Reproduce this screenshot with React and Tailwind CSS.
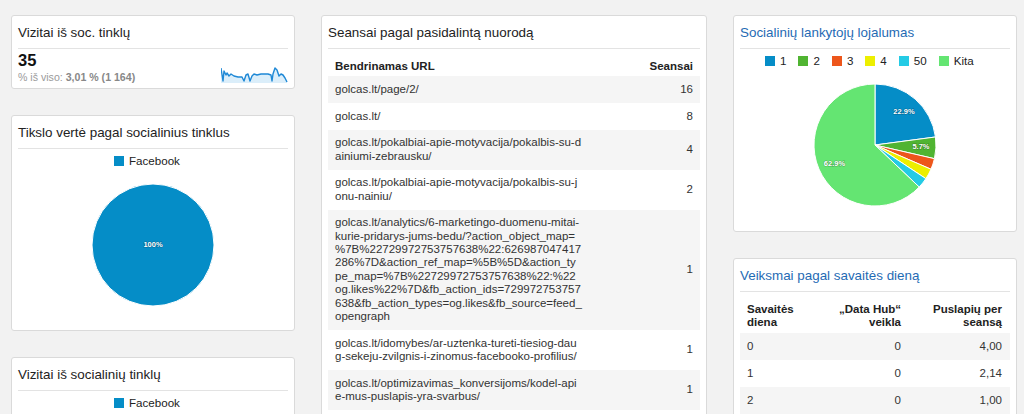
const FONT = "font-['Liberation_Sans',Arial,Helvetica,sans-serif]"

const SHARED = [
  { url: ['golcas.lt/page/2/'], n: 16 },
  { url: ['golcas.lt/'], n: 8 },
  { url: ['golcas.lt/pokalbiai-apie-motyvacija/pokalbis-su-d', 'ainiumi-zebrausku/'], n: 4 },
  { url: ['golcas.lt/pokalbiai-apie-motyvacija/pokalbis-su-j', 'onu-nainiu/'], n: 2 },
  {
    url: [
      'golcas.lt/analytics/6-marketingo-duomenu-mitai-',
      'kurie-pridarys-jums-bedu/?action_object_map=',
      '%7B%22729972753757638%22:626987047417',
      '286%7D&action_ref_map=%5B%5D&action_ty',
      'pe_map=%7B%22729972753757638%22:%22',
      'og.likes%22%7D&fb_action_ids=729972753757',
      '638&fb_action_types=og.likes&fb_source=feed_',
      'opengraph',
    ],
    n: 1,
  },
  { url: ['golcas.lt/idomybes/ar-uztenka-tureti-tiesiog-dau', 'g-sekeju-zvilgnis-i-zinomus-facebooko-profilius/'], n: 1 },
  { url: ['golcas.lt/optimizavimas_konversijoms/kodel-api', 'e-mus-puslapis-yra-svarbus/'], n: 1 },
]

const LOYALTY = [
  { v: 22.9, c: '#058dc7', name: '1' },
  { v: 5.7, c: '#50b432', name: '2' },
  { v: 2.9, c: '#ed561b', name: '3' },
  { v: 2.8, c: '#edef00', name: '4' },
  { v: 2.8, c: '#24cbe5', name: '50' },
  { v: 62.9, c: '#64e572', name: 'Kita' },
]

const WEEKDAYS = [
  ['0', '0', '4,00'],
  ['1', '0', '2,14'],
  ['2', '0', '1,00'],
]

// sparkline points, 67x17 box
const SPARK = [
  [0, 2], [2, 15], [3, 5], [5, 9], [6, 7], [8, 10], [10, 8], [13, 10], [17, 11], [21, 11],
  [23, 15], [25, 9], [27, 8], [29, 15], [31, 10], [33, 8], [36, 9], [40, 8], [44, 8],
  [47, 8], [50, 9], [51, 15], [52, 8], [54, 2], [56, 4], [58, 10], [60, 8], [62, 9],
  [64, 12], [66, 16],
]

function Card({ title, blue, children }) {
  return (
    <div className="rounded-[3px] border border-[#dadada] bg-white px-[6px]">
      <div
        className={`border-b border-[#e3e3e3] pt-[9px] pb-[7px] text-[13.4px] leading-4 ${
          blue ? 'text-[#1f6bb4]' : 'text-[#222]'
        }`}
      >
        {title}
      </div>
      {children}
    </div>
  )
}

function Sparkline() {
  const pts = SPARK.map(([x, y]) => `${x},${y}`).join(' ')
  return (
    <svg width="67" height="17" viewBox="0 0 67 17" className="block">
      <polygon points={`0,17 ${pts} 66,17`} fill="#dbeefa" />
      <polyline points={pts} fill="none" stroke="#1e88d6" strokeWidth="1.4" strokeLinejoin="round" />
    </svg>
  )
}

function arc(cx, cy, r, a0, a1) {
  const rad = (d) => ((d - 90) * Math.PI) / 180
  const x0 = cx + r * Math.cos(rad(a0))
  const y0 = cy + r * Math.sin(rad(a0))
  const x1 = cx + r * Math.cos(rad(a1))
  const y1 = cy + r * Math.sin(rad(a1))
  const large = a1 - a0 > 180 ? 1 : 0
  return `M${cx},${cy} L${x0},${y0} A${r},${r} 0 ${large} 1 ${x1},${y1} Z`
}

function PieLabel({ x, y, children }) {
  return (
    <text
      x={x}
      y={y}
      textAnchor="middle"
      dominantBaseline="middle"
      fill="#fff"
      fontSize="7.5"
      fontWeight="bold"
      style={{ paintOrder: 'stroke' }}
      stroke="rgba(0,0,0,0.25)"
      strokeWidth="1.2"
    >
      {children}
    </text>
  )
}

function LoyaltyPie() {
  let cum = 0
  return (
    <svg width="124" height="124" viewBox="0 0 124 124" className="mx-auto block">
      {LOYALTY.map((s) => {
        const a0 = cum * 3.6
        cum += s.v
        const a1 = cum * 3.6
        return <path key={s.name} d={arc(62, 62, 61, a0, a1)} fill={s.c} stroke="#fff" strokeWidth="1" />
      })}
      <PieLabel x={91} y={29}>22.9%</PieLabel>
      <PieLabel x={108} y={64}>5.7%</PieLabel>
      <PieLabel x={21.5} y={81}>62.9%</PieLabel>
    </svg>
  )
}

function FacebookPie() {
  return (
    <svg width="124" height="124" viewBox="0 0 124 124" className="mx-auto block">
      <circle cx="62" cy="62" r="61" fill="#058dc7" stroke="#fff" strokeWidth="1" />
      <PieLabel x={62} y={62}>100%</PieLabel>
    </svg>
  )
}

function Legend({ items, className }) {
  return (
    <div className={`mt-[5px] flex h-[14px] items-center gap-x-[12px] text-[11.6px] leading-[14px] text-[#222] ${className}`}>
      {items.map((it) => (
        <div key={it.name} className="flex items-center">
          <span className="mr-[5px] inline-block h-[10px] w-[10px]" style={{ background: it.c }} />
          {it.name}
        </div>
      ))}
    </div>
  )
}

export default function App() {
  return (
    <div className={`h-screen overflow-hidden bg-[#f2f2f2] ${FONT}`}>
      <div className="flex gap-[26px] pt-[15px] pl-[11px]">
        {/* left column */}
        <div className="flex w-[284px] flex-col gap-[26px]">
          <Card title="Vizitai iš soc. tinklų">
            <div className="flex items-end justify-between pb-[5px]">
              <div>
                <div className="mt-[1.5px] text-[16.5px] font-bold leading-[18px] text-[#111]">35</div>
                <div className="mt-[2px] text-[10.6px] leading-[12px] text-[#9a9a9a]">
                  % iš viso: <span className="font-bold text-[#888]">3,01 % (1 164)</span>
                </div>
              </div>
              <Sparkline />
            </div>
          </Card>

          <Card title="Tikslo vertė pagal socialinius tinklus">
            <Legend items={[{ name: 'Facebook', c: '#058dc7' }]} className="pl-[96px]" />
            <div className="mt-[15px] mb-[23px]">
              <FacebookPie />
            </div>
          </Card>

          <Card title="Vizitai iš socialinių tinklų">
            <Legend items={[{ name: 'Facebook', c: '#058dc7' }]} className="pl-[96px]" />
            <div className="mt-[15px] mb-[23px]">
              <FacebookPie />
            </div>
          </Card>
        </div>

        {/* middle column */}
        <div className="flex w-[386px] flex-col gap-[26px]">
          <Card title="Seansai pagal pasidalintą nuorodą">
            <table className="mt-[7px] mb-[8px] w-full border-collapse text-[11.5px] leading-[13.4px] text-[#333]">
              <thead>
                <tr className="font-bold text-[#222]">
                  <th className="pt-[4px] pb-[3px] pl-[7px] text-left">Bendrinamas URL</th>
                  <th className="pt-[4px] pb-[3px] pr-[7px] text-right">Seansai</th>
                </tr>
              </thead>
              <tbody>
                {SHARED.map((row, i) => (
                  <tr key={i} className={i % 2 === 0 ? 'bg-[#f5f5f5]' : 'bg-white'}>
                    <td className="py-[6.6px] pl-[7px] whitespace-nowrap">
                      {row.url.map((l, j) => (
                        <div key={j}>{l}</div>
                      ))}
                    </td>
                    <td className="py-[6.6px] pr-[7px] text-right align-middle">{row.n}</td>
                  </tr>
                ))}
              </tbody>
            </table>
          </Card>
        </div>

        {/* right column */}
        <div className="flex w-[284px] flex-col gap-[26px]">
          <Card title="Socialinių lankytojų lojalumas" blue>
            <Legend items={LOYALTY} className="pl-[25px]" />
            <div className="mt-[15px] mb-[24px]">
              <LoyaltyPie />
            </div>
          </Card>

          <Card title="Veiksmai pagal savaitės dieną" blue>
            <table className="mt-[7px] mb-[8px] w-full border-collapse text-[11.5px] leading-[13.4px] text-[#333]">
              <thead>
                <tr className="align-bottom font-bold text-[#222]">
                  <th className="w-[84px] pt-[4px] pb-[3px] pl-[7px] text-left">
                    Savaitės
                    <br />
                    diena
                  </th>
                  <th className="w-[84px] pt-[4px] pb-[3px] pr-[7px] text-right">
                    „Data Hub“
                    <br />
                    veikla
                  </th>
                  <th className="pt-[4px] pb-[3px] pr-[8px] text-right">
                    Puslapių per
                    <br />
                    seansą
                  </th>
                </tr>
              </thead>
              <tbody>
                {WEEKDAYS.map((r, i) => (
                  <tr key={i} className={i % 2 === 0 ? 'bg-[#f5f5f5]' : 'bg-white'}>
                    <td className="py-[6.8px] pl-[7px]">{r[0]}</td>
                    <td className="py-[6.8px] pr-[7px] text-right">{r[1]}</td>
                    <td className="py-[6.8px] pr-[8px] text-right">{r[2]}</td>
                  </tr>
                ))}
              </tbody>
            </table>
          </Card>
        </div>
      </div>
    </div>
  )
}
